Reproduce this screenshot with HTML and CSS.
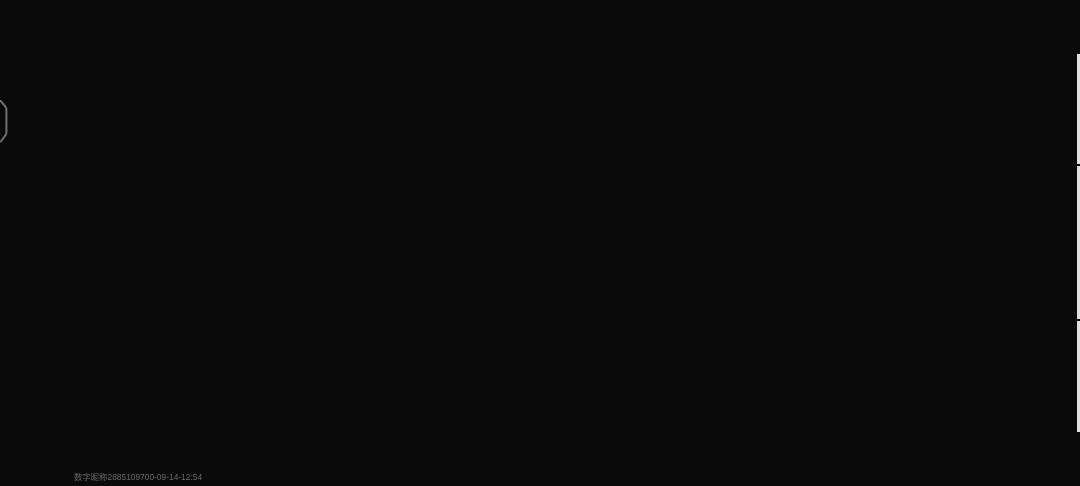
FILE: index.html
```html
<!DOCTYPE html>
<html lang="zh">
<head>
<meta charset="utf-8">
<title>数字昵称</title>
<link rel="stylesheet" href="styles.css">
</head>
<body>
<div class="page">
  <main class="main">
    <svg class="hex" width="10" height="48" viewBox="0 0 10 48" aria-hidden="true">
      <path d="M-2 3 L0.8 3 L5.4 8.6 Q6.4 9.9 6.4 11.5 V34.5 Q6.4 36.1 5.4 37.4 L0.8 43.5 L-2 43.5" fill="none" stroke="#707070" stroke-width="2"/>
    </svg>
    <div class="watermark">数字昵称2885109700-09-14-12:54</div>
  </main>
  <aside class="rail">
    <div class="tab tab-a"></div>
    <div class="tab tab-b"></div>
    <div class="tab tab-c"></div>
  </aside>
</div>
</body>
</html>
```
FILE: styles.css
```css
html, body {
  margin: 0;
  height: 100%;
  background: #0a0a0a;
  overflow: hidden;
}
.page {
  display: flex;
  width: 1080px;
  height: 486px;
  background: #0a0a0a;
}
.main {
  position: relative;
  flex: 1;
  display: flex;
  align-items: flex-end;
  padding-left: 74px;
}
.hex {
  position: absolute;
  left: 0;
  top: 98px;
  filter: blur(0.5px);
}
.watermark {
  font-family: "Liberation Sans", "Noto Sans CJK SC", sans-serif;
  font-size: 8.4px;
  line-height: 12px;
  padding-bottom: 3px;
  color: #6a6a6a;
  white-space: nowrap;
  filter: blur(0.3px);
}
.rail {
  width: 3px;
  padding-top: 54px;
  display: flex;
  flex-direction: column;
  gap: 2px;
}
.tab { background: #e0e0e0; }
.tab-a { height: 110px; }
.tab-b { height: 153px; }
.tab-c { height: 111px; }
```
